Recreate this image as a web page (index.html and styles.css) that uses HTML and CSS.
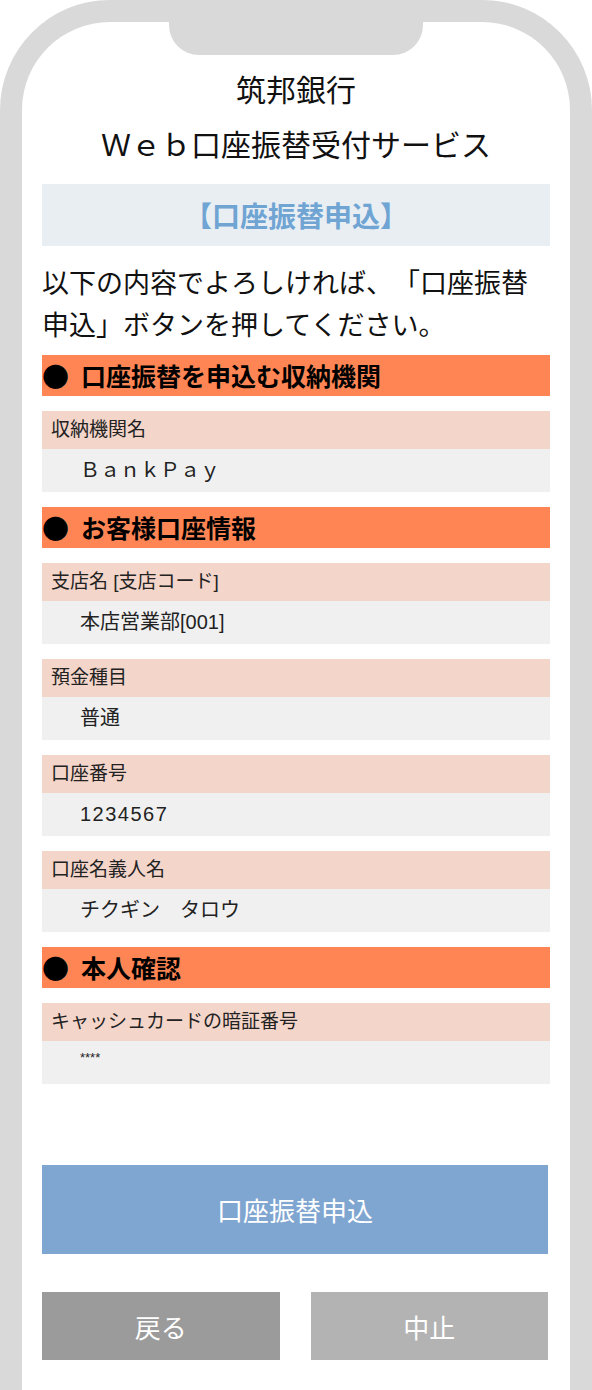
FILE: index.html
```html
<!DOCTYPE html>
<html lang="ja">
<head>
<meta charset="utf-8">
<title>Web口座振替受付サービス</title>
<link rel="stylesheet" href="styles.css">
</head>
<body>
<div class="phone">
  <div class="notch"></div>
  <div class="screen">
    <h1 class="bank">筑邦銀行</h1>
    <h2 class="service">Ｗｅｂ口座振替受付サービス</h2>
    <div class="page-title">【口座振替申込】</div>
    <p class="lead">以下の内容でよろしければ、「口座振替申込」ボタンを押してください。</p>
    <div class="form">
      <h3 class="sec-head"><span class="dot">●</span>口座振替を申込む収納機関</h3>
      <div class="field">
        <div class="label">収納機関名</div>
        <div class="value">ＢａｎｋＰａｙ</div>
      </div>
      <h3 class="sec-head"><span class="dot">●</span>お客様口座情報</h3>
      <div class="field">
        <div class="label">支店名 [支店コード]</div>
        <div class="value">本店営業部[001]</div>
      </div>
      <div class="field">
        <div class="label">預金種目</div>
        <div class="value">普通</div>
      </div>
      <div class="field">
        <div class="label">口座番号</div>
        <div class="value digits">1234567</div>
      </div>
      <div class="field">
        <div class="label">口座名義人名</div>
        <div class="value">チクギン　タロウ</div>
      </div>
      <h3 class="sec-head"><span class="dot">●</span>本人確認</h3>
      <div class="field">
        <div class="label">キャッシュカードの暗証番号</div>
        <div class="value"><span class="pin">****</span></div>
      </div>
    </div>
    <div class="actions">
      <button class="btn btn-primary" type="button">口座振替申込</button>
      <div class="btn-row">
        <button class="btn btn-back" type="button">戻る</button>
        <button class="btn btn-cancel" type="button">中止</button>
      </div>
    </div>
  </div>
</div>
</body>
</html>
```

FILE: styles.css
```css
* {
  box-sizing: border-box;
}

html, body {
  margin: 0;
  padding: 0;
  background: #ffffff;
}

body {
  font-family: "Noto Sans CJK JP", "Noto Sans", sans-serif;
  color: #1a1a1a;
  text-spacing-trim: space-all;
}

.phone {
  position: relative;
  width: 592px;
  height: 1390px;
  border: 22px solid #d9d9d9;
  border-bottom: none;
  border-radius: 110px 110px 0 0;
  background: #ffffff;
  overflow: hidden;
}

.notch {
  position: absolute;
  top: 0;
  left: calc(50% - 127px);
  width: 254px;
  height: 33px;
  background: #d9d9d9;
  border-radius: 0 0 30px 30px;
}

.screen {
  padding: 39px 20px 0 20px;
}

.bank,
.service {
  margin: 0;
  font-size: 30px;
  font-weight: 400;
  line-height: 55px;
  text-align: center;
  color: #111111;
}

.page-title {
  margin-top: 13px;
  height: 62px;
  line-height: 62px;
  background: #e9eef3;
  color: #6fa4d3;
  font-size: 28px;
  font-weight: 700;
  text-align: center;
}

.lead {
  margin: 15px 0 10px 0;
  font-size: 27px;
  line-height: 42px;
  color: #111111;
}

.form {
  display: flex;
  flex-direction: column;
  gap: 15px;
}

.sec-head {
  margin: 0;
  height: 41px;
  line-height: 41px;
  background: #ff8654;
  font-size: 25px;
  font-weight: 700;
  color: #000000;
  display: flex;
  align-items: center;
}

.dot {
  display: inline-block;
  width: 39px;
  font-size: 27px;
}

.field {
  display: flex;
  flex-direction: column;
}

.label {
  height: 38px;
  line-height: 38px;
  padding-left: 9px;
  background: #f4d5ca;
  font-family: "Liberation Sans", "Noto Sans CJK JP", sans-serif;
  font-size: 19px;
  color: #222222;
}

.value {
  height: 43px;
  line-height: 43px;
  padding-left: 38px;
  background: #f0f0f0;
  font-family: "Liberation Sans", "Noto Sans CJK JP", sans-serif;
  font-size: 20px;
  color: #222222;
}

.digits {
  letter-spacing: 1.5px;
}

.pin {
  font-size: 13px;
  vertical-align: top;
  line-height: 34px;
}

.actions {
  width: 506px;
  margin-top: 81px;
  display: flex;
  flex-direction: column;
  gap: 38px;
}

.btn {
  border: none;
  margin: 0;
  padding: 0;
  font-family: "Noto Sans CJK JP", "Noto Sans", sans-serif;
  font-size: 26px;
  font-weight: 400;
  color: #ffffff;
  cursor: pointer;
}

.btn-primary {
  height: 89px;
  background: #7fa6d1;
}

.btn-row {
  display: grid;
  grid-template-columns: 1fr 1fr;
  gap: 31px;
}

.btn-back,
.btn-cancel {
  height: 68px;
}

.btn-back {
  background: #9b9b9b;
}

.btn-cancel {
  background: #b3b3b3;
}
```
